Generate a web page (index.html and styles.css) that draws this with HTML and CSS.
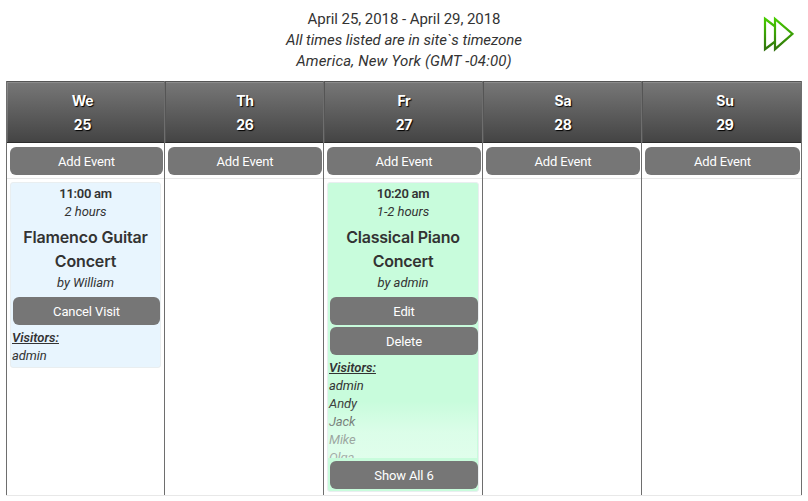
FILE: index.html
```html
<!DOCTYPE html>
<html lang="en">
<head>
<meta charset="utf-8">
<title>Event Calendar</title>
<link rel="stylesheet" href="styles.css">
</head>
<body>
<header class="top">
  <div class="range">
    <div class="dates">April 25, 2018 - April 29, 2018</div>
    <div class="note">All times listed are in site`s timezone</div>
    <div class="zone">America, New York (GMT -04:00)</div>
  </div>
  <a class="next" aria-label="Next">
    <svg width="32" height="36" viewBox="0 0 32 36">
      <defs><linearGradient id="g" gradientUnits="userSpaceOnUse" x1="0" y1="1" x2="0" y2="35"><stop offset="0" stop-color="#48d000"/><stop offset="1" stop-color="#2f6f0c"/></linearGradient></defs>
      <path d="M12.5 10 L3 2.8 V33.2 L12.5 26" fill="none" stroke="url(#g)" stroke-width="2.2"/>
      <path d="M13 2.8 V33.2 L30.5 17.8 Z" fill="#fff" stroke="url(#g)" stroke-width="2.2"/>
    </svg>
  </a>
</header>
<main class="week">
  <section class="day">
    <h2 class="head">We<br>25</h2>
    <div class="add"><a class="btn">Add Event</a></div>
    <div class="events">
      <article class="event visit">
        <div class="time">11:00 am</div>
        <div class="meta">2 hours</div>
        <h3 class="title">Flamenco Guitar Concert</h3>
        <div class="meta">by William</div>
        <div class="actions"><a class="btn">Cancel Visit</a></div>
        <div class="label">Visitors:</div>
        <div class="visitors">admin</div>
      </article>
    </div>
  </section>
  <section class="day">
    <h2 class="head">Th<br>26</h2>
    <div class="add"><a class="btn">Add Event</a></div>
    <div class="events"></div>
  </section>
  <section class="day">
    <h2 class="head">Fr<br>27</h2>
    <div class="add"><a class="btn">Add Event</a></div>
    <div class="events">
      <article class="event own">
        <div class="time">10:20 am</div>
        <div class="meta">1-2 hours</div>
        <h3 class="title piano">Classical Piano Concert</h3>
        <div class="meta">by admin</div>
        <div class="actions"><a class="btn">Edit</a><a class="btn">Delete</a></div>
        <div class="label">Visitors:</div>
        <div class="visitors short">admin<br>Andy<br>Jack<br>Mike<br>Olga</div>
        <div class="actions more"><a class="btn">Show All 6</a></div>
      </article>
    </div>
  </section>
  <section class="day">
    <h2 class="head">Sa<br>28</h2>
    <div class="add"><a class="btn">Add Event</a></div>
    <div class="events"></div>
  </section>
  <section class="day">
    <h2 class="head">Su<br>29</h2>
    <div class="add"><a class="btn">Add Event</a></div>
    <div class="events"></div>
  </section>
</main>
</body>
</html>
```
FILE: styles.css
```css
* { box-sizing: border-box; }
body { margin: 0; background: #fff; color: #333; font: 13px/18px Roboto, sans-serif; overflow: hidden; }
h2, h3 { margin: 0; }

.top { display: grid; grid-template-columns: 46px 1fr 46px; height: 81px; padding-top: 9px; }
.range { grid-column: 2; text-align: center; font-size: 15px; line-height: 21px; }
.dates { letter-spacing: -0.06px; }
.note { font-style: italic; letter-spacing: -0.04px; }
.zone { font-style: italic; letter-spacing: 0.17px; }
.next { padding-top: 7px; }
.next svg { display: block; }

.week { display: grid; grid-template-columns: 158px 159px 159px 159px 161px; width: 796px; height: 415px; margin-left: 6px; border-bottom: 1px solid #e8e8e8; }
.day { display: flex; flex-direction: column; border-left: 1px solid #6e6e6e; }
.day:last-child { border-right: 1px solid #6e6e6e; }
.head {
  height: 62px; padding: 7px 6px 0 0; color: #fff; text-align: center;
  font: 700 14px/24px Inter, sans-serif; letter-spacing: -0.25px;
  text-shadow: 1px 1px 1px #000;
  background: linear-gradient(#777, #444);
  border-top: 1px solid #555; border-bottom: 1px solid #2c2c2c;
  box-shadow: inset 1px 1px 0 rgba(255, 255, 255, 0.16);
}
.day + .day .head { padding: 7px 0 0 1px; border-left: 1px solid #555; box-shadow: inset 0 1px 0 rgba(255, 255, 255, 0.16); }
.day:last-child .head { padding-left: 6px; }
.add { height: 36px; padding: 4px 1px 0 3px; border-bottom: 1px solid #e8e8e8; }
.btn {
  display: block; height: 28px; border-radius: 6px; background: #767676; color: #fff;
  text-align: center; font-size: 13px; line-height: 28px; letter-spacing: -0.13px;
}
.add .btn { line-height: 29px; }
.events { padding: 3px 3px 0; }
.event { padding: 2px 0 3px; border: 1px solid #e9eef0; border-radius: 3px; text-align: center; }
.visit { height: 186px; background: #e8f5fe; }
.own { height: 310px; background: #c8fcdc; }
.time { font-weight: 600; letter-spacing: -0.3px; }
.meta { font-style: italic; letter-spacing: -0.05px; }
.title { padding: 4px 10px 0; font: 600 16px/24px Inter, sans-serif; letter-spacing: -0.14px; }
.piano { letter-spacing: -0.24px; }
.title + .meta { line-height: 19px; }
.actions { display: flex; flex-direction: column; gap: 2px; margin: 5px 0 0 2px; }
.actions .btn { line-height: 29px; }
.label { padding: 4px 0 0 1px; text-align: left; font-weight: 600; font-style: italic; text-decoration: underline; }
.visitors { padding-left: 1px; text-align: left; font-style: italic; letter-spacing: -0.1px; }
.short {
  position: relative; height: 81px; overflow: hidden;
}
.short::after {
  content: ""; position: absolute; inset: 24px 1px 0 0;
  background: linear-gradient(rgba(255, 255, 255, 0), rgba(235, 255, 243, 0.55) 55%, rgba(240, 255, 246, 0.6));
}
.more { margin-top: 3px; }
```
